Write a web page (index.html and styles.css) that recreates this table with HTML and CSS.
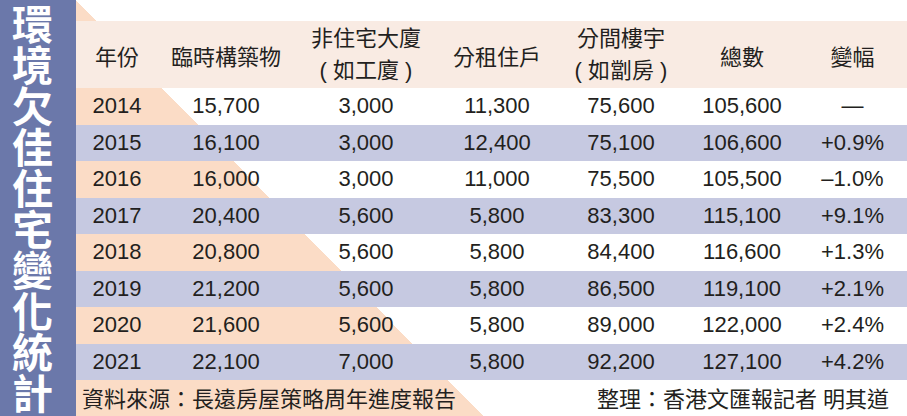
FILE: index.html
```html
<!DOCTYPE html>
<html lang="zh-Hant">
<head>
<meta charset="utf-8">
<title>環境欠佳住宅變化統計</title>
<link rel="stylesheet" href="styles.css">
</head>
<body>
<div class="page">
  <aside class="side"><h1 class="title">環境欠佳住宅變化統計</h1></aside>
  <main class="main">
    <div class="top"></div>
    <div class="grid head">
      <div class="cell">年份</div>
      <div class="cell">臨時構築物</div>
      <div class="cell two">非住宅大廈<br>( 如工廈 )</div>
      <div class="cell">分租住戶</div>
      <div class="cell two">分間樓宇<br>( 如劏房 )</div>
      <div class="cell">總數</div>
      <div class="cell">變幅</div>
    </div>
    <div class="grid row"><div class="cell">2014</div><div class="cell">15,700</div><div class="cell">3,000</div><div class="cell">11,300</div><div class="cell">75,600</div><div class="cell">105,600</div><div class="cell">—</div></div>
    <div class="grid row alt"><div class="cell">2015</div><div class="cell">16,100</div><div class="cell">3,000</div><div class="cell">12,400</div><div class="cell">75,100</div><div class="cell">106,600</div><div class="cell">+0.9%</div></div>
    <div class="grid row"><div class="cell">2016</div><div class="cell">16,000</div><div class="cell">3,000</div><div class="cell">11,000</div><div class="cell">75,500</div><div class="cell">105,500</div><div class="cell">–1.0%</div></div>
    <div class="grid row alt"><div class="cell">2017</div><div class="cell">20,400</div><div class="cell">5,600</div><div class="cell">5,800</div><div class="cell">83,300</div><div class="cell">115,100</div><div class="cell">+9.1%</div></div>
    <div class="grid row"><div class="cell">2018</div><div class="cell">20,800</div><div class="cell">5,600</div><div class="cell">5,800</div><div class="cell">84,400</div><div class="cell">116,600</div><div class="cell">+1.3%</div></div>
    <div class="grid row alt"><div class="cell">2019</div><div class="cell">21,200</div><div class="cell">5,600</div><div class="cell">5,800</div><div class="cell">86,500</div><div class="cell">119,100</div><div class="cell">+2.1%</div></div>
    <div class="grid row"><div class="cell">2020</div><div class="cell">21,600</div><div class="cell">5,600</div><div class="cell">5,800</div><div class="cell">89,000</div><div class="cell">122,000</div><div class="cell">+2.4%</div></div>
    <div class="grid row alt"><div class="cell">2021</div><div class="cell">22,100</div><div class="cell">7,000</div><div class="cell">5,800</div><div class="cell">92,200</div><div class="cell">127,100</div><div class="cell">+4.2%</div></div>
    <footer class="foot">
      <span>資料來源：長遠房屋策略周年進度報告</span>
      <span>整理：香港文匯報記者 明其道</span>
    </footer>
  </main>
</div>
</body>
</html>
```
FILE: styles.css
```css
html, body {
  margin: 0;
  padding: 0;
  background: #fff;
}
.page {
  display: flex;
  width: 907px;
  height: 416px;
  overflow: hidden;
  font-family: "Liberation Sans", "Noto Sans CJK TC", sans-serif;
  color: #231f20;
}
.side {
  width: 76px;
  flex: none;
  background: #6b78aa;
  display: flex;
  justify-content: center;
  align-items: flex-start;
  padding: 4px 12px 0 0;
  box-sizing: border-box;
}
.title {
  margin: 0;
  writing-mode: vertical-rl;
  font-family: "Noto Sans CJK TC", sans-serif;
  font-weight: 700;
  font-size: 41px;
  line-height: 1;
  color: #fff;
}
.main {
  flex: 1;
  display: flex;
  flex-direction: column;
  background: linear-gradient(45.6deg, #fbdcc6 290.8px, #fff 290.8px);
}
.top {
  height: 21px;
  flex: none;
}
.grid {
  display: grid;
  grid-template-columns: 82px 136px 144px 118px 130px 112px 109px;
  font-size: 22px;
  flex: none;
}
.head {
  height: 67px;
  background: #f9ebe3;
}
.row {
  height: 36.5px;
}
.alt {
  background: #c6c9e1;
}
.cell {
  display: flex;
  align-items: center;
  justify-content: center;
  text-align: center;
  white-space: nowrap;
}
.two {
  line-height: 32px;
}
.foot {
  flex: 1;
  display: flex;
  justify-content: space-between;
  align-items: center;
  padding: 0 18px 2px 6px;
  font-size: 22px;
}
```
